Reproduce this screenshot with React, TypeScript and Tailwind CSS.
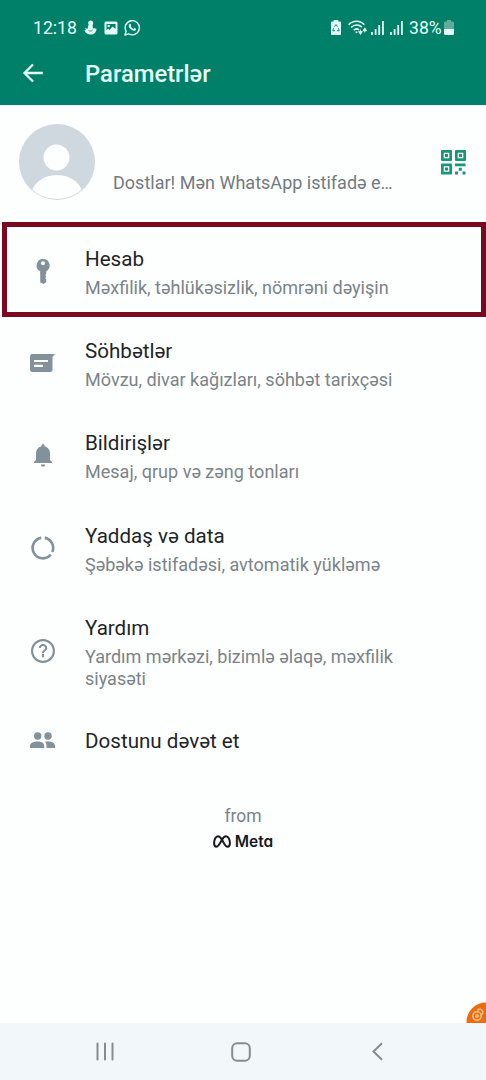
import type { ReactNode } from 'react';

interface SettingItem {
  id: string;
  title: string;
  lines?: string[];
  icon: ReactNode;
}

const settings: SettingItem[] = [
  {
    id: 'account',
    title: 'Hesab',
    lines: ['Məxfilik, təhlükəsizlik, nömrəni dəyişin'],
    icon: <KeyIcon />,
  },
  {
    id: 'chats',
    title: 'Söhbətlər',
    lines: ['Mövzu, divar kağızları, söhbət tarixçəsi'],
    icon: <ChatIcon />,
  },
  {
    id: 'notifications',
    title: 'Bildirişlər',
    lines: ['Mesaj, qrup və zəng tonları'],
    icon: <BellIcon />,
  },
  {
    id: 'storage',
    title: 'Yaddaş və data',
    lines: ['Şəbəkə istifadəsi, avtomatik yükləmə'],
    icon: <DataIcon />,
  },
  {
    id: 'help',
    title: 'Yardım',
    lines: ['Yardım mərkəzi, bizimlə əlaqə, məxfilik', 'siyasəti'],
    icon: <HelpIcon />,
  },
  {
    id: 'invite',
    title: 'Dostunu dəvət et',
    icon: <PeopleIcon />,
  },
];

export default function App() {
  return (
    <div className="relative flex h-[1080px] w-[486px] flex-col overflow-hidden bg-[#fdfefe] font-['Roboto',sans-serif]">
      <header className="h-[105px] shrink-0 bg-[#008068] text-[#e4fff8]">
        <StatusBar />
        <div className="flex h-[54px] items-center pl-[22px]">
          <BackIcon />
          <h1 className="ml-[41px] text-[23.8px] leading-[30px] font-medium">Parametrlər</h1>
        </div>
      </header>

      <Profile />

      {/* Settings list */}
      <main className="relative flex flex-col">
        {settings.map((item) => (
          <SettingRow key={item.id} item={item} />
        ))}
        {/* Highlight frame around the account row */}
        <div className="absolute top-[-3px] left-[2px] h-[95px] w-[484px] border-[5px] border-[#7b0820]" />
      </main>

      <footer className="mt-[30px] flex flex-col items-center">
        <span className="text-[17.5px] leading-6 text-[#7b8489]">from</span>
        <div className="mt-[2px] flex h-6 items-center gap-[4px] text-[#161a1c]">
          <MetaIcon />
          <span className="font-['Inter',sans-serif] text-[15.5px] leading-6 font-semibold [font-feature-settings:'cv11']">Meta</span>
        </div>
      </footer>

      {/* Floating recorder bubble, half off screen */}
      <div className="absolute top-[1002px] right-0 h-[21px] w-[20px] overflow-hidden">
        <BubbleIcon />
      </div>

      <NavBar />
    </div>
  );
}

function StatusBar() {
  return (
    <div className="flex h-[47px] items-center justify-between pt-[8px] pr-[32px] pl-[33px] text-[18px] leading-6">
      <div className="flex items-center">
        <span className="w-[44px] text-[17.6px]">12:18</span>
        <svg className="ml-[7px]" width="13" height="15" viewBox="0 0 13 15" fill="currentColor">
          <circle cx="6.7" cy="3" r="2.5" />
          <path d="M4.5 5h4l.4 3.4c1.3-.5 2.4.2 3.6.5-.3 3.3-2.4 5.6-5.8 5.6C3.600 14.500 1 13 .4 10.300l1.800-.4L.8 8.300l2.800.5z" />
          <path d="M4.500 10.500c1.200 1 3 .8 4.300-.7" stroke="#008068" strokeWidth="0.800" fill="none" />
        </svg>
        <svg className="ml-[7px]" width="14" height="14" viewBox="0 0 14 14">
          <rect x="0.500" y="0.500" width="13" height="13" rx="1.500" fill="currentColor" />
          <path d="M2.500 3h9v5L8.500 5.500 5.500 9 4 7.800 2.500 9z" fill="#008068" />
          <circle cx="4.700" cy="5" r="1.200" fill="currentColor" />
        </svg>
        <svg className="ml-[6px]" width="17" height="17" viewBox="0 0 17 17" fill="none" stroke="currentColor" strokeWidth="1.400">
          <path d="M1 16l1.100-3.800a7.100 7.100 0 1 1 2.700 2.700z" strokeLinejoin="round" />
          <path d="M5.300 5.200c1-1 1.500-.1 1.900 1l-.5 1.100c.7 1.300 1.500 2 2.800 2.600l1-.9c1 .4 2.200.9 1.400 1.900-1.800 1.800-4.300.3-5.600-1.100C5 8.500 4.200 6.700 5.300 5.200z" fill="currentColor" stroke="none" />
        </svg>
      </div>
      <div className="flex items-center">
        <svg width="10" height="15" viewBox="0 0 11 15" preserveAspectRatio="none">
          <path d="M3 0h5v1.500h2a1 1 0 0 1 1 1V14a1 1 0 0 1-1 1H1a1 1 0 0 1-1-1V2.500a1 1 0 0 1 1-1h2z" fill="currentColor" />
          <path d="M3.800 6.800l1.700-2.300 1.700 2.300M8.200 8.200l.8 2.600H6.600M4.400 10.800H2l.8-2.600" fill="none" stroke="#008068" strokeWidth="1" />
        </svg>
        <svg className="ml-[7px]" width="19" height="15" viewBox="0 0 19 15" fill="none" stroke="currentColor" strokeWidth="1.600">
          <path d="M.7 4.700c4.300-4.600 11.300-4.600 15.600 0M3.200 7.500c3-3.200 7.600-3.200 10.600-.3M5.700 10.200c1.700-1.700 3.800-1.700 5.400-.2" />
          <circle cx="8.500" cy="12.300" r="1" fill="currentColor" stroke="none" />
          <path d="M10.700 11.500h3.600l-1.800 3zM12.500 9.500v3M15 10.800h3.600l-1.800-3zM16.800 10v2.500" fill="currentColor" strokeWidth="0.800" />
        </svg>
        <SignalIcon className="ml-[4px]" />
        <SignalIcon className="ml-[6px]" />
        <span className="ml-[6px] w-[33px] text-[17.600px]">38%</span>
        <svg className="ml-[2px]" width="10" height="15" viewBox="0 0 10 15">
          <path d="M3 0h4v1.500h1.500A1.500 1.500 0 0 1 10 3v6H0V3a1.500 1.500 0 0 1 1.500-1.500H3z" fill="#61ad9b" />
          <path d="M0 9h10v4.500A1.500 1.500 0 0 1 8.500 15h-7A1.500 1.500 0 0 1 0 13.500z" fill="currentColor" />
        </svg>
      </div>
    </div>
  );
}

function SignalIcon({ className }: { className: string }) {
  return (
    <svg className={className} width="13" height="14" viewBox="0 0 13 14" fill="currentColor">
      <rect y="11" width="1.800" height="3" />
      <rect x="3.700" y="8" width="1.800" height="6" />
      <rect x="7.300" y="4" width="1.800" height="10" />
      <rect x="11" width="1.800" height="14" />
    </svg>
  );
}

function Profile() {
  return (
    <section className="flex h-[120px] shrink-0 items-start pt-[19px] pl-[19px]">
      <svg width="76" height="76" viewBox="0 0 76 76">
        <defs>
          <clipPath id="avatar">
            <circle cx="38" cy="38" r="37" />
          </clipPath>
        </defs>
        <circle cx="38" cy="38" r="38" fill="#cfd7df" />
        <g clipPath="url(#avatar)" fill="#fdfefe">
          <circle cx="37.500" cy="33.500" r="13" />
          <ellipse cx="38" cy="72" rx="26" ry="21" />
        </g>
      </svg>
      <p className="mt-[48px] ml-[18px] w-[282px] text-[18.05px] leading-[22px] whitespace-nowrap text-[#727b80]">
        Dostlar! Mən WhatsApp istifadə e…
      </p>
      <svg className="mt-[26px] ml-[46px]" width="25" height="25" viewBox="0 0 25 25" fill="#159778">
        <path fillRule="evenodd" d="M1 0h9a1 1 0 0 1 1 1v9a1 1 0 0 1-1 1H1a1 1 0 0 1-1-1V1a1 1 0 0 1 1-1zm1.700 2.700v5.600h5.600V2.700z" />
        <path fillRule="evenodd" d="M15 0h9a1 1 0 0 1 1 1v9a1 1 0 0 1-1 1h-9a1 1 0 0 1-1-1V1a1 1 0 0 1 1-1zm1.700 2.700v5.600h5.600V2.700z" />
        <path fillRule="evenodd" d="M1 13.500h9a1 1 0 0 1 1 1v9a1 1 0 0 1-1 1H1a1 1 0 0 1-1-1v-9a1 1 0 0 1 1-1zm1.700 2.700v5.600h5.600v-5.600z" />
        <rect x="4" y="4" width="3" height="3" />
        <rect x="18" y="4" width="3" height="3" />
        <rect x="4" y="17.500" width="3" height="3" />
        <path d="M14 13.500h10.500v2.700H14zM17.800 17.800h3v3h-3zM14 21.500h3v3h-3zM21.500 21.500h3v3h-3z" />
      </svg>
    </section>
  );
}

function SettingRow({ item }: { item: SettingItem }) {
  const height = !item.lines ? 'h-[66px]' : item.lines.length > 1 ? 'h-[113.8px]' : 'h-[92.3px]';

  return (
    <div className={`flex shrink-0 items-center ${height}`}>
      <div className="flex w-[85px] shrink-0 justify-center text-[#82919a]">{item.icon}</div>
      <div className="pt-px whitespace-nowrap">
        <h2 className="text-[20.6px] leading-7 text-[#1e2529]">{item.title}</h2>
        {item.lines && (
          <div className="mt-1 text-[18.05px] leading-[21.5px] text-[#7b8489]">
            {item.lines.map((line) => (
              <p key={line}>{line}</p>
            ))}
          </div>
        )}
      </div>
    </div>
  );
}

function NavBar() {
  return (
    <nav className="mt-auto flex h-[57px] shrink-0 items-center bg-[#f2f7f9] pl-[96px] text-[#858b8e]">
      <svg width="18" height="19" viewBox="0 0 18 19" stroke="currentColor" strokeWidth="2" strokeLinecap="round">
        <path d="M1.500 1.500v16M9 1.500v16M16.500 1.500v16" />
      </svg>
      <svg className="ml-[117px]" width="20" height="20" viewBox="0 0 20 20" fill="none" stroke="currentColor" strokeWidth="2">
        <rect x="1.200" y="1.200" width="17.600" height="17.600" rx="5" />
      </svg>
      <svg className="ml-[121px]" width="11" height="19" viewBox="0 0 11 19" fill="none" stroke="currentColor" strokeWidth="2">
        <path d="M10 1.300L1.500 9.500 10 17.700" />
      </svg>
    </nav>
  );
}

function BackIcon() {
  return (
    <svg className="mt-[-2px]" width="22" height="20" viewBox="0 0 22 20" fill="none" stroke="currentColor" strokeWidth="2.300">
      <path d="M20.800 10H3M11 1.500L2.500 10l8.500 8.500" />
    </svg>
  );
}

function KeyIcon() {
  return (
    <svg width="14" height="25" viewBox="0 0 14 25" fill="currentColor">
      <path fillRule="evenodd" d="M7 0a6.500 6.500 0 0 1 3.200 12.200v2.500l-.9 1.300.9 1.500-.9 1.500.9 1.500v2.500L7.700 25 4.200 23.500V12.300A6.500 6.500 0 0 1 7 0zm0 2.300a2 2 0 1 0 0 4 2 2 0 0 0 0-4z" />
    </svg>
  );
}

function ChatIcon() {
  return (
    <svg width="25" height="18" viewBox="0 0 25 18">
      <path d="M2.500 0H25l-2.500 3v12.500A2.500 2.500 0 0 1 20 18H2.500A2.500 2.500 0 0 1 0 15.500v-13A2.500 2.500 0 0 1 2.500 0z" fill="currentColor" />
      <path d="M4 7h14M4 11.800h9" stroke="#fdfefe" strokeWidth="2.200" />
    </svg>
  );
}

function BellIcon() {
  return (
    <svg width="18" height="23" viewBox="0 0 18 23" fill="currentColor">
      <path d="M7.500 1.500a1.500 1.500 0 0 1 3 0v.7C14 3 16 6 16 9.500V16l2 2v1H0v-1l2-2V9.500C2 6 4 3 7.500 2.200zM6.800 20.500h4.400a2.200 2.200 0 0 1-4.400 0z" />
    </svg>
  );
}

function DataIcon() {
  return (
    <svg width="24" height="24" viewBox="0 0 24 24" fill="none" stroke="currentColor" strokeWidth="2.600">
      <path d="M13.800 1.900a10.300 10.300 0 0 1 7.500 14.200M19.800 18.700A10.300 10.300 0 1 1 10.200 1.900" />
    </svg>
  );
}

function HelpIcon() {
  return (
    <svg width="24" height="24" viewBox="0 0 24 24" fill="currentColor">
      <path d="M11 17h2v-2h-2v2zm1-17C5.400 0 0 5.400 0 12s5.400 12 12 12 12-5.400 12-12S18.600 0 12 0zm0 21.800c-5.400 0-9.800-4.400-9.800-9.800S6.600 2.200 12 2.200s9.800 4.400 9.800 9.800-4.400 9.800-9.800 9.800z" />
      <path d="M12 5c-2.400 0-4.200 1.800-4.200 4.100h2.100c0-1.200.9-2.100 2.100-2.100s2.100.9 2.100 2.100c0 2-3.100 1.900-3.100 5.200h2.100c0-2.300 3.100-2.600 3.100-5.200C16.200 6.800 14.400 5 12 5z" />
      <path d="M11 16h2v2.300h-2z" />
    </svg>
  );
}

function PeopleIcon() {
  return (
    <svg width="25" height="17" viewBox="0 0 25 17" fill="currentColor">
      <circle cx="7.700" cy="4" r="3.700" />
      <circle cx="18" cy="4" r="3.700" />
      <path d="M0 13.800c0-3 4.500-4.300 7.700-4.300s6.500 1.300 6.500 4.300V16H0zM15 9.700c1-.2 2.200-.2 3-.2 3.200 0 7 1.300 7 4.300V16h-8.500v-2.200c0-1.800-.4-3-1.500-4.100z" />
    </svg>
  );
}

function MetaIcon() {
  return (
    <svg width="18" height="13" viewBox="0 0 18 13" fill="none" stroke="currentColor" strokeWidth="2">
      <path d="M9 4.800C7.500 2.300 6.500 1.200 5 1.200 2.800 1.200 1.100 4.500 1.100 8c0 2.300.9 3.700 2.400 3.700C5.500 11.700 7 8.500 9 4.800c1.300-2.500 2.500-3.600 4-3.600 2.200 0 3.900 3.300 3.900 6.800 0 2.300-.9 3.700-2.400 3.700C12.500 11.700 11 8.200 9 4.800z" />
    </svg>
  );
}

function BubbleIcon() {
  return (
    <svg width="40" height="40" viewBox="0 0 40 40">
      <circle cx="20" cy="20" r="19.500" fill="#ee6c10" />
      <g fill="none" stroke="#ffc48a" strokeWidth="1.500">
        <circle cx="11" cy="14" r="4.200" />
        <circle cx="11" cy="14" r="1.200" />
        <path d="M11.500 8.500c1.500-2 5-1.300 5.300 1 .2 1.600-.5 2.500-1.500 3" />
      </g>
    </svg>
  );
}
